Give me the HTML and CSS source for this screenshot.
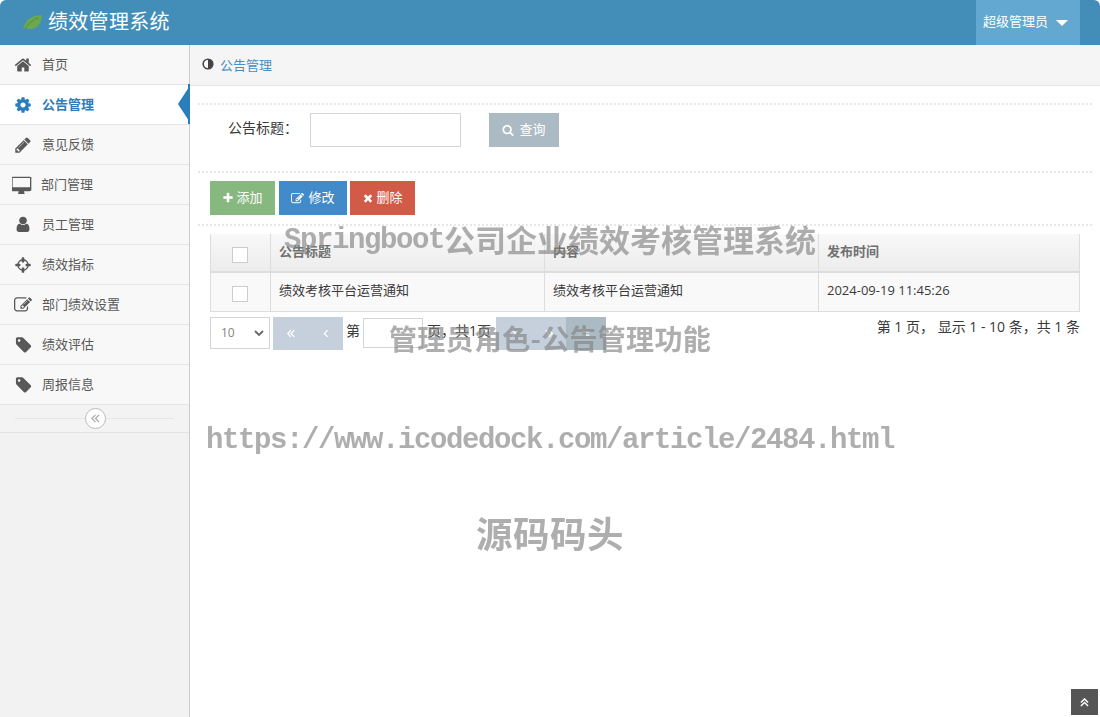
FILE: index.html
```html
<!DOCTYPE html>
<html lang="zh-CN">
<head>
    <meta charset="UTF-8">
    <title>绩效管理系统</title>
    <link rel="stylesheet" href="styles.css">
</head>
<body>
    <svg class="icon-defs" xmlns="http://www.w3.org/2000/svg">
        <symbol id="i-home" viewBox="0 0 1664 1792"><path d="M1408 992v480q0 26-19 45t-45 19h-384v-384h-256v384h-384q-26 0-45-19t-19-45v-480q0-1 .5-3t.5-3l575-474 575 474q1 2 1 6zm223-69l-62 74q-8 9-21 11h-3q-13 0-21-7l-692-577-692 577q-12 8-24 7-13-2-21-11l-62-74q-8-10-7-23.500t11-21.500l719-599q32-26 76-26t76 26l244 204v-195q0-14 9-23t23-9h192q14 0 23 9t9 23v408l219 182q10 8 11 21.500t-7 23.500z"/></symbol>
        <symbol id="i-cog" viewBox="0 0 1792 1792"><path d="M1152 896q0-106-75-181t-181-75-181 75-75 181 75 181 181 75 181-75 75-181zm512-109v222q0 12-8 23t-20 13l-185 28q-19 54-39 91 35 50 107 138 10 12 10 25t-9 23q-27 37-99 108t-94 71q-12 0-26-9l-138-108q-44 23-91 38-16 136-29 186-7 28-36 28h-222q-14 0-24.500-8.500t-11.500-21.500l-28-184q-49-16-90-37l-141 107q-10 9-25 9-14 0-25-11-126-114-165-168-7-10-7-23 0-12 8-23 15-21 51-66.500t54-70.500q-27-50-41-99l-183-27q-13-2-21-12.500t-8-23.500v-222q0-12 8-23t19-13l186-28q14-46 39-92-40-57-107-138-10-12-10-24 0-10 9-23 26-36 98.500-107.500t94.500-71.500q13 0 26 10l138 107q44-23 91-38 16-136 29-186 7-28 36-28h222q14 0 24.500 8.500t11.500 21.500l28 184q49 16 90 37l142-107q9-9 24-9 13 0 25 10 129 119 165 170 7 8 7 22 0 12-8 23-15 21-51 66.500t-54 70.500q26 50 41 98l183 28q13 2 21 12.500t8 23.500z"/></symbol>
        <symbol id="i-pencil" viewBox="0 0 1536 1792"><path d="M363 1536l91-91-235-235-91 91v107h128v128h107zm523-928q0-22-22-22-10 0-17 7l-542 542q-7 7-7 17 0 22 22 22 10 0 17-7l542-542q7-7 7-17zm-54-192l416 416-832 832h-416v-416zm683 96q0 53-37 90l-166 166-416-416 166-165q36-38 90-38 53 0 91 38l235 234q37 39 37 91z"/></symbol>
        <symbol id="i-desktop" viewBox="0 0 1920 1600"><path d="M1728 992v-832q0-13-9.500-22.500t-22.500-9.500h-1600q-13 0-22.500 9.500t-9.500 22.500v832q0 13 9.500 22.500t22.500 9.500h1600q13 0 22.500-9.500t9.500-22.500zm128-832v1088q0 66-47 113t-113 47h-544q0 37 16 77.500t32 71 16 43.500q0 26-19 45t-45 19h-512q-26 0-45-19t-19-45q0-14 16-44t32-70 16-78h-544q-66 0-113-47t-47-113v-1088q0-66 47-113t113-47h1632q66 0 113 47t47 113z"/></symbol>
        <symbol id="i-user" viewBox="0 0 1792 1792"><path transform="translate(0 -64)" d="M1536 1399q0 109-62.500 187t-150.500 78h-854q-88 0-150.500-78t-62.500-187q0-85 8.500-160.500t31.500-152 58.500-131 94-89 134.500-34.500q131 128 313 128t313-128q76 0 134.500 34.500t94 89 58.500 131 31.500 152 8.500 160.500zm-256-887q0 159-112.500 271.500t-271.500 112.500-271.500-112.500-112.500-271.500 112.500-271.500 271.500-112.500 271.500 112.500 112.500 271.500z"/></symbol>
        <symbol id="i-cross" viewBox="0 0 1536 1792"><path d="M1197 1024h-109q-26 0-45-19t-19-45v-128q0-26 19-45t45-19h109q-32-108-112.500-188.500t-188.500-112.500v109q0 26-19 45t-45 19h-128q-26 0-45-19t-19-45v-109q-108 32-188.500 112.500t-112.500 188.500h109q26 0 45 19t19 45v128q0 26-19 45t-45 19h-109q32 108 112.500 188.500t188.500 112.500v-109q0-26 19-45t45-19h128q26 0 45 19t19 45v109q108-32 188.500-112.500t112.500-188.500zm339-192v128q0 26-19 45t-45 19h-143q-37 161-154.500 278.500t-278.500 154.500v143q0 26-19 45t-45 19h-128q-26 0-45-19t-19-45v-143q-161-37-278.500-154.500t-154.500-278.500h-143q-26 0-45-19t-19-45v-128q0-26 19-45t45-19h143q37-161 154.500-278.500t278.500-154.500v-143q0-26 19-45t45-19h128q26 0 45 19t19 45v143q161 37 278.500 154.500t154.500 278.500h143q26 0 45 19t19 45z"/></symbol>
        <symbol id="i-edit" viewBox="0 0 1792 1792"><path d="M888 1184l116-116-152-152-116 116v56h96v96h56zm440-720q-16-16-33 1l-350 350q-17 17-1 33t33-1l350-350q17-17 1-33zm80 594v190q0 119-84.500 203.500t-203.500 84.500h-832q-119 0-203.500-84.500t-84.500-203.500v-832q0-119 84.500-203.500t203.500-84.500h832q63 0 117 25 15 7 18 23 3 17-9 29l-49 49q-14 14-32 8-23-6-45-6h-832q-66 0-113 47t-47 113v832q0 66 47 113t113 47h832q66 0 113-47t47-113v-126q0-13 9-22l64-64q15-15 35-7t20 29zm-96-738l288 288-672 672h-288v-288zm444 132l-92 92-288-288 92-92q28-28 68-28t68 28l152 152q28 28 28 68t-28 68z"/></symbol>
        <symbol id="i-tag" viewBox="0 0 1664 1792"><path d="M576 448q0-53-37.500-90.500t-90.500-37.500-90.500 37.500-37.500 90.500 37.500 90.500 90.500 37.500 90.500-37.500 37.500-90.500zm1067 576q0 53-37 90l-491 492q-39 37-91 37-53 0-90-37l-715-716q-38-37-64.500-101t-26.500-117v-416q0-52 38-90t90-38h416q53 0 117 26.500t102 64.500l715 714q37 39 37 91z"/></symbol>
        <symbol id="i-search" viewBox="0 0 1792 1792"><path d="M1216 832q0-185-131.500-316.500t-316.500-131.500-316.500 131.500-131.500 316.500 131.500 316.500 316.500 131.500 316.500-131.500 131.500-316.500zm512 832q0 52-38 90t-90 38q-54 0-90-38l-343-342q-179 124-399 124-143 0-273.500-55.500t-225-150-150-225-55.500-273.500 55.500-273.500 150-225 225-150 273.500-55.500 273.500 55.500 225 150 150 225 55.500 273.500q0 220-124 399l343 343q37 37 37 90z"/></symbol>
        <symbol id="i-plus" viewBox="0 0 1792 1792"><path d="M1600 736v192q0 40-28 68t-68 28h-416v416q0 40-28 68t-68 28h-192q-40 0-68-28t-28-68v-416h-416q-40 0-68-28t-28-68v-192q0-40 28-68t68-28h416v-416q0-40 28-68t68-28h192q40 0 68 28t28 68v416h416q40 0 68 28t28 68z"/></symbol>
        <symbol id="i-times" viewBox="0 0 1792 1792"><path d="M1490 1322q0 40-28 68l-136 136q-28 28-68 28t-68-28l-294-294-294 294q-28 28-68 28t-68-28l-136-136q-28-28-28-68t28-68l294-294-294-294q-28-28-28-68t28-68l136-136q28-28 68-28t68 28l294 294 294-294q28-28 68-28t68 28l136 136q28 28 28 68t-28 68l-294 294 294 294q28 28 28 68z"/></symbol>
    </svg>

    <header class="navbar">
        <div class="brand">
            <svg class="leaf" viewBox="0 0 22 18"><path d="M1 17C2 8 9 1 21 1c0 9-5 15-13 15-2 0-4-1-5-2l-2 3z" fill="#6aa84f"/><path d="M4 14C8 9 12 6 17 4" fill="none" stroke="#4d8f3f"/></svg>
            <span class="brand-name">绩效管理系统</span>
        </div>
        <div class="user-menu"><span class="user-name">超级管理员</span><i class="caret"></i></div>
    </header>

    <div class="layout">
        <nav class="sidebar">
            <a class="nav-item"><svg class="nav-icon"><use href="#i-home"/></svg>首页</a>
            <a class="nav-item active"><svg class="nav-icon"><use href="#i-cog"/></svg>公告管理</a>
            <a class="nav-item"><svg class="nav-icon"><use href="#i-pencil"/></svg>意见反馈</a>
            <a class="nav-item"><svg class="nav-icon wide"><use href="#i-desktop"/></svg>部门管理</a>
            <a class="nav-item"><svg class="nav-icon"><use href="#i-user"/></svg>员工管理</a>
            <a class="nav-item"><svg class="nav-icon"><use href="#i-cross"/></svg>绩效指标</a>
            <a class="nav-item"><svg class="nav-icon"><use href="#i-edit"/></svg>部门绩效设置</a>
            <a class="nav-item"><svg class="nav-icon"><use href="#i-tag"/></svg>绩效评估</a>
            <a class="nav-item"><svg class="nav-icon"><use href="#i-tag"/></svg>周报信息</a>
            <div class="collapse-row">
                <span class="collapse-btn">
                    <svg viewBox="0 0 12 10"><path d="M6 1L2 5l4 4M10 1L6 5l4 4" fill="none" stroke="#aaa" stroke-width="1.400"/></svg>
                </span>
            </div>
        </nav>

        <main class="main">
            <div class="breadcrumb">
                <svg class="adjust" viewBox="0 0 12 12"><circle cx="6" cy="6" r="4.800" fill="#fff" stroke="#444" stroke-width="1.600"/><path d="M6 1.200a4.800 4.800 0 0 1 0 9.600z" fill="#444"/></svg>
                <a>公告管理</a>
            </div>

            <div class="page">
                <form class="search-row">
                    <label class="search-label">公告标题：</label>
                    <input class="search-input" type="text">
                    <button class="btn btn-grey btn-search" type="button"><svg class="btn-icon"><use href="#i-search"/></svg>查询</button>
                </form>

                <div class="toolbar">
                    <button class="btn btn-green" type="button"><svg class="btn-icon"><use href="#i-plus"/></svg>添加</button>
                    <button class="btn btn-blue" type="button"><svg class="btn-icon"><use href="#i-edit"/></svg>修改</button>
                    <button class="btn btn-red" type="button"><svg class="btn-icon"><use href="#i-times"/></svg>删除</button>
                </div>

                <div class="table-wrap">
                    <table class="grid">
                        <colgroup>
                            <col class="col-check"><col class="col-text"><col class="col-text"><col>
                        </colgroup>
                        <thead>
                            <tr>
                                <th class="cell-check"><span class="checkbox"></span></th>
                                <th>公告标题</th>
                                <th>内容</th>
                                <th>发布时间</th>
                            </tr>
                        </thead>
                        <tbody>
                            <tr>
                                <td class="cell-check"><span class="checkbox"></span></td>
                                <td>绩效考核平台运营通知</td>
                                <td>绩效考核平台运营通知</td>
                                <td>2024-09-19 11:45:26</td>
                            </tr>
                        </tbody>
                    </table>

                    <div class="pager">
                        <div class="page-size">10<svg viewBox="0 0 10 6"><path d="M1 1l4 4 4-4" fill="none" stroke="#666" stroke-width="1.800"/></svg></div>
                        <div class="pager-group">
                            <span class="pager-btn"><svg viewBox="0 0 12 10"><path d="M6 1L2 5l4 4M10 1L6 5l4 4" fill="none" stroke="#fff" stroke-width="1.500"/></svg></span>
                            <span class="pager-btn"><svg viewBox="0 0 12 10"><path d="M8 1L4 5l4 4" fill="none" stroke="#fff" stroke-width="1.500"/></svg></span>
                        </div>
                        <span class="pager-text">第</span>
                        <input class="pager-input" type="text">
                        <span class="pager-text pager-total">页，共1页</span>
                        <div class="pager-group">
                            <span class="pager-btn"><svg viewBox="0 0 12 10"><path d="M4 1l4 4-4 4" fill="none" stroke="#fff" stroke-width="1.500"/></svg></span>
                            <span class="pager-btn"><svg viewBox="0 0 12 10"><path d="M2 1l4 4-4 4M6 1l4 4-4 4" fill="none" stroke="#fff" stroke-width="1.500"/></svg></span>
                            <span class="pager-btn dark"><svg viewBox="0 0 12 10"><path d="M2 3h8M2 7h8" fill="none" stroke="#fff" stroke-width="1.500"/></svg></span>
                        </div>
                        <span class="pager-info">第 1 页， 显示 1 - 10 条，共 1 条</span>
                    </div>
                </div>
            </div>
        </main>
    </div>

    <!-- watermark lies over the page -->
    <div class="watermark">
        <div class="mark-line"><span class="mark-latin">Springboot</span><span class="mark-cjk">公司企业绩效考核管理系统</span></div>
        <div class="mark-line"><span class="mark-cjk tight">管理员角色-公告管理功能</span></div>
        <div class="mark-line"><span class="mark-latin">https://www.icodedock.com/article/2484.html</span></div>
        <div class="mark-line"><span class="mark-big">源码码头</span></div>
    </div>

    <a class="back-top"><svg viewBox="0 0 10 10"><path d="M1 5l4-4 4 4M1 9l4-4 4 4" fill="none" stroke="#fff" stroke-width="1.600"/></svg></a>
</body>
</html>
```

FILE: styles.css
```css
* {
    box-sizing: border-box;
}
html, body {
    height: 100%;
}
body {
    margin: 0;
    display: flex;
    flex-direction: column;
    background: #fff;
    color: #393939;
    font-family: "Open Sans", "Noto Sans CJK SC", sans-serif;
    font-size: 13px;
    overflow: hidden;
}
.icon-defs {
    display: none;
}

/* top bar */
.navbar {
    height: 45px;
    flex: none;
    display: flex;
    justify-content: space-between;
    background: #438eb9;
    border-radius: 6px 6px 0 0;
    color: #fff;
}
.brand {
    display: flex;
    align-items: center;
    padding-left: 22px;
}
.brand-name {
    font-size: 20px;
    letter-spacing: 0.3px;
    margin-bottom: 4px;
}
.leaf {
    width: 21px;
    height: 17px;
    margin-right: 5px;
}
.user-menu {
    width: 104px;
    margin-right: 20px;
    display: flex;
    align-items: center;
    padding-left: 7px;
    background: #62a8d1;
}
.user-name {
    margin-bottom: 4px;
}
.caret {
    margin-left: 8px;
    border-top: 6px solid #fff;
    border-left: 6px solid transparent;
    border-right: 6px solid transparent;
}

/* sidebar */
.layout {
    flex: 1;
    display: flex;
    min-height: 0;
}
.sidebar {
    width: 190px;
    flex: none;
    background: #f2f2f2;
    border-right: 1px solid #ccc;
}
.nav-item {
    height: 40px;
    display: flex;
    align-items: center;
    padding: 0 0 2px 14px;
    background: #f8f8f8;
    border-bottom: 1px solid #e5e5e5;
    color: #585858;
    position: relative;
}
.nav-icon {
    width: 18px;
    height: 18px;
    margin: 2px 10px 0 0;
    fill: #585858;
}
.nav-icon.wide {
    width: 20px;
    height: 18px;
    margin: 2px 9px 0 -2px;
}
.nav-item.active {
    background: #fff;
    color: #2b7dbc;
    font-weight: bold;
}
.nav-item.active .nav-icon {
    fill: #2b7dbc;
}
.nav-item.active::before {
    content: "";
    position: absolute;
    top: -1px;
    right: -1px;
    bottom: 0;
    width: 2px;
    background: #2b7dbc;
}
.nav-item.active::after {
    content: "";
    position: absolute;
    top: 2px;
    right: 0;
    border-top: 17px solid transparent;
    border-bottom: 17px solid transparent;
    border-right: 11px solid #2b7dbc;
}
.collapse-row {
    height: 28px;
    display: flex;
    align-items: center;
    justify-content: center;
    background: linear-gradient(#e5e5e5, #e5e5e5) no-repeat center / 159px 1px, #f3f3f3;
    border-bottom: 1px solid #e5e5e5;
}
.collapse-btn {
    width: 21px;
    height: 21px;
    margin-left: 1px;
    display: flex;
    align-items: center;
    justify-content: center;
    background: #fff;
    border: 1px solid #bbb;
    border-radius: 50%;
}
.collapse-btn svg {
    width: 11px;
    height: 9px;
}

/* content */
.main {
    flex: 1;
    min-width: 0;
}
.breadcrumb {
    height: 41px;
    display: flex;
    align-items: center;
    padding: 0 0 2px 12px;
    background: #f5f5f5;
    border-bottom: 1px solid #e5e5e5;
    color: #4c8fbd;
}
.adjust {
    width: 12px;
    height: 12px;
    margin-right: 6px;
}
.page {
    padding: 17px 8px 0;
}
.search-row {
    display: flex;
    align-items: center;
    height: 68px;
    padding: 0 0 16px 30px;
    border-top: 2px dotted #e8e8e8;
    margin: 0;
}
.search-label {
    width: 82px;
    font-size: 14px;
    margin-bottom: 7px;
}
.search-input {
    width: 151px;
    height: 34px;
    border: 1px solid #d5d5d5;
    background: #fff;
    padding: 0 6px;
}
.btn {
    height: 34px;
    display: inline-flex;
    align-items: center;
    justify-content: center;
    border: 0;
    color: #fff;
    font: inherit;
    padding: 0 0 3px;
}
.btn-icon {
    width: 12px;
    height: 12px;
    margin: 3px 2px 0 0;
    fill: #fff;
}
.btn-search {
    width: 70px;
    margin-left: 28px;
}
.btn-search .btn-icon {
    margin-right: 5px;
}
.btn-grey {
    background: #abbac3;
}
.btn-green {
    width: 65px;
    background: #87b87f;
}
.btn-blue {
    width: 68px;
    margin-left: 1px;
    background: #428bca;
}
.btn-blue .btn-icon {
    width: 13px;
    height: 13px;
    margin-right: 4px;
}
.btn-red {
    width: 65px;
    background: #d15b47;
}
.toolbar {
    height: 53px;
    display: flex;
    gap: 3px;
    padding: 8px 0 0 12px;
    border-top: 2px dotted #e8e8e8;
}
.table-wrap {
    padding: 8px 12px 0;
    border-top: 2px dotted #e8e8e8;
}

/* table */
.grid {
    width: 100%;
    table-layout: fixed;
    border-collapse: collapse;
    color: #393939;
}
.col-check {
    width: 60px;
}
.col-text {
    width: 274px;
}
.grid th, .grid td {
    padding: 0 8px 4px;
    border: 1px solid #ddd;
    text-align: left;
}
.grid th {
    height: 38px;
    border-top: 0;
    border-bottom: 2px solid #ddd;
    background: linear-gradient(#f8f8f8, #ececec);
    color: #707070;
    font-weight: bold;
}
.grid td {
    height: 39px;
    background: #f9f9f9;
}
.grid th.cell-check {
    padding: 3px 1px 0 0;
    text-align: center;
}
.grid td.cell-check {
    padding: 2px 1px 0 0;
    text-align: center;
}
.checkbox {
    display: inline-block;
    width: 16px;
    height: 16px;
    vertical-align: middle;
    background: #fff;
    border: 1px solid #ccc;
}

/* pager */
.pager {
    display: flex;
    align-items: flex-start;
    margin-top: 5px;
}
.page-size {
    width: 60px;
    height: 32px;
    display: flex;
    align-items: center;
    justify-content: space-between;
    padding: 0 5px 0 10px;
    border: 1px solid #d5d5d5;
    color: #858585;
    font-size: 12px;
}
.page-size svg {
    width: 10px;
    height: 6px;
}
.pager-group {
    display: flex;
    margin-left: 3px;
}
.pager-btn {
    width: 35px;
    height: 33px;
    display: flex;
    align-items: center;
    justify-content: center;
    background: #c5d0dc;
}
.pager-btn svg {
    width: 10px;
    height: 9px;
}
.pager-btn.dark {
    width: 40px;
    background: #abbac3;
}
.pager-text {
    margin: 5px 3px 0;
    line-height: 18px;
    font-size: 14px;
}
.pager-total {
    margin: 5px 2px 0 4px;
}
.pager-input {
    width: 60px;
    height: 30px;
    margin-top: 1px;
    border: 1px solid #d5d5d5;
    background: #fff;
}
.pager-info {
    margin: 1px 0 0 auto;
    line-height: 18px;
    font-size: 14px;
}

/* watermark */
.watermark {
    position: fixed;
    top: 190px;
    left: 0;
    right: 0;
    display: flex;
    flex-direction: column;
    align-items: center;
    color: rgba(130, 130, 130, 0.65);
    font-weight: bold;
    pointer-events: none;
}
.mark-line {
    height: 100px;
    display: flex;
    align-items: center;
    line-height: 1;
    white-space: nowrap;
}
.mark-latin {
    font-family: "Liberation Mono", monospace;
    font-size: 29px;
    letter-spacing: -1.400px;
}
.mark-cjk {
    font-family: "Noto Sans CJK SC", sans-serif;
    font-size: 31px;
    margin-bottom: 4px;
}
.mark-cjk.tight {
    font-size: 28px;
    letter-spacing: 0.3px;
}
.mark-big {
    font-family: "Noto Sans CJK SC", sans-serif;
    font-size: 36.500px;
    letter-spacing: 0.5px;
    margin-bottom: 14px;
}

.back-top {
    position: fixed;
    right: 2px;
    bottom: 2px;
    width: 27px;
    height: 26px;
    display: flex;
    align-items: center;
    justify-content: center;
    background: #555;
}
.back-top svg {
    width: 9px;
    height: 9px;
}
```
